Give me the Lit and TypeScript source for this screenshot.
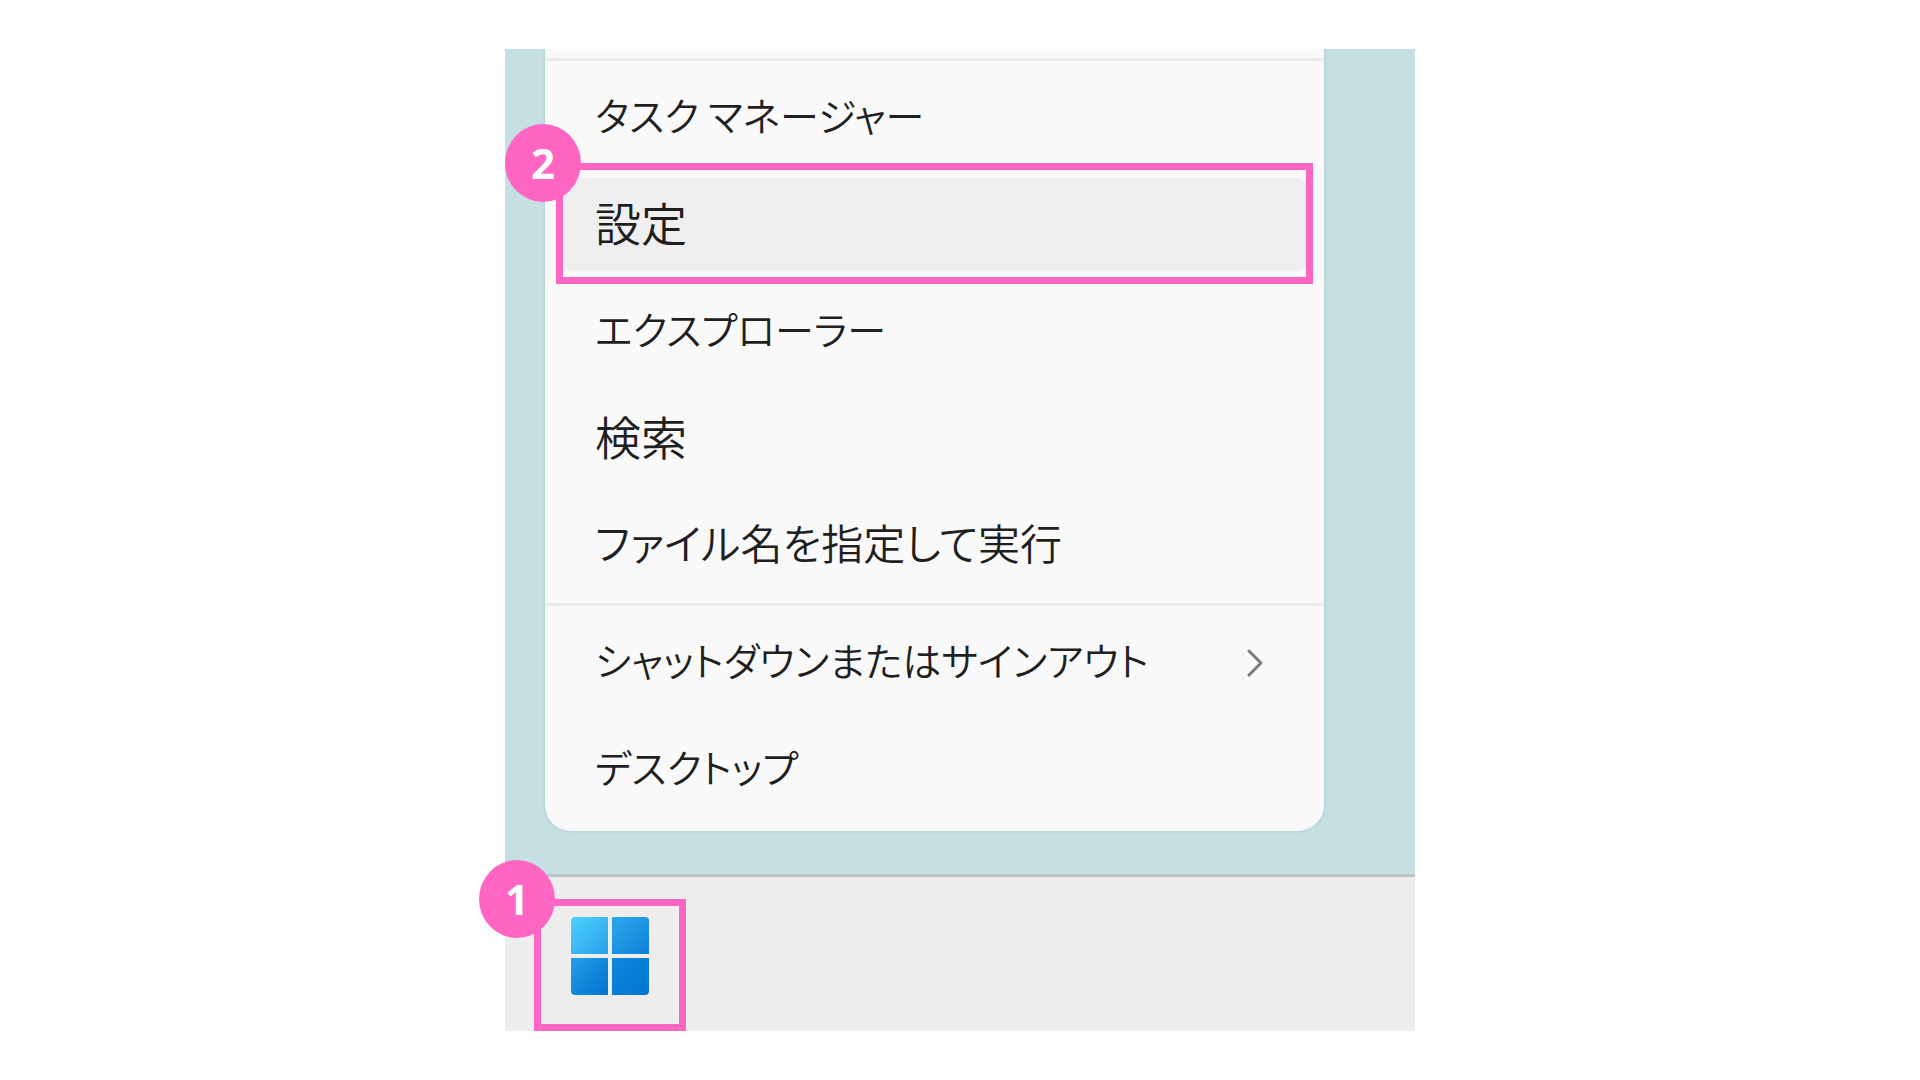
import { LitElement, html, svg, css } from "lit";
import { customElement, property } from "lit/decorators.js";

interface MenuEntry {
  label: string;
  size?: "medium" | "large";
  submenu?: boolean;
  step?: number;
}

const GROUPS: MenuEntry[][] = [
  [
    { label: "タスク マネージャー" },
    { label: "設定", size: "large", step: 2 },
    { label: "エクスプローラー" },
    { label: "検索", size: "large" },
    { label: "ファイル名を指定して実行", size: "medium" },
  ],
  [
    { label: "シャットダウンまたはサインアウト", submenu: true },
    { label: "デスクトップ" },
  ],
];

/* Pink frame with a numbered badge, laid over the control it points at. */
@customElement("step-marker")
export class StepMarker extends LitElement {
  @property({ type: Number }) step = 1;

  static styles = css`
    :host {
      position: absolute;
      box-sizing: border-box;
      border: 7px solid #ff66c4;
      pointer-events: none;
    }
    .badge {
      position: absolute;
      top: var(--badge-top, -46px);
      left: var(--badge-left, -58px);
      display: flex;
      align-items: center;
      justify-content: center;
      width: 76px;
      height: 78px;
      border-radius: 50%;
      background: #ff66c4;
      color: #fff;
      font: 700 42px/48px "Noto Sans", sans-serif;
    }
  `;

  render() {
    return html`<span class="badge">${this.step}</span>`;
  }
}

@customElement("app-root")
export class AppRoot extends LitElement {
  static styles = css`
    :host {
      display: block;
      min-height: 100vh;
      box-sizing: border-box;
      padding: 49px 24px;
      background: #fff;
      font-family: "Noto Sans CJK JP", sans-serif;
      color: #1f1f1f;
    }
    .screen {
      max-width: 910px;
      margin: 0 auto;
    }
    .desktop {
      padding: 0 91px 43px 40px;
      background: #c6dfe2;
    }
    .menu {
      padding: 9px 0 15px;
      border-radius: 0 0 26px 26px;
      background: #f9f9f9;
      box-shadow: 0 0 3px 1px #b4d0d4;
      clip-path: inset(0 -6px -6px -60px);
    }
    .divider {
      height: 3px;
      margin: 0 0 10px;
      border: 0;
      background: #ebebeb;
    }
    .group {
      display: flex;
      flex-direction: column;
      gap: 14px;
      margin: 0;
      padding: 0 16px;
      list-style: none;
    }
    .group + .divider {
      margin-top: 11px;
    }
    .row {
      position: relative;
    }
    .item {
      display: flex;
      align-items: center;
      justify-content: space-between;
      width: 100%;
      min-height: 93px;
      padding: 0 45px 0 34px;
      border: 0;
      border-radius: 12px;
      background: transparent;
      color: inherit;
      font: 350 39px/56px "Noto Sans CJK JP", sans-serif;
      font-feature-settings: "palt";
      text-align: left;
    }
    .item.medium {
      font-size: 42px;
    }
    .item.large {
      font-size: 46px;
    }
    .item.active {
      background: #efefef;
    }
    .label {
      padding-bottom: 8px;
    }
    .chevron {
      display: block;
      width: 16px;
      height: 28px;
    }
    .row step-marker {
      inset: -15px -5px -13px -5px;
    }
    .taskbar {
      display: flex;
      padding: 22px 29px 0;
      border-top: 3px solid #c2c4c4;
      background: #ededed;
    }
    .start {
      position: relative;
      display: flex;
      padding: 18px 37px 36px;
      border: 0;
      background: transparent;
    }
    .start step-marker {
      inset: 0;
      --badge-left: -62px;
    }
    .logo {
      display: block;
      width: 78px;
      height: 78px;
    }
  `;

  private chevron() {
    return html`<svg class="chevron" viewBox="0 0 16 28" aria-hidden="true">
      <path d="M2 2 L14 14 L2 26" fill="none" stroke="#7c7c7c" stroke-width="3" stroke-linecap="round" stroke-linejoin="round" />
    </svg>`;
  }

  private logo() {
    const stop = (id: string, from: string, to: string) => svg`
      <linearGradient id=${id} x1="0" y1="0" x2="1" y2="1">
        <stop offset="0" stop-color=${from} />
        <stop offset="1" stop-color=${to} />
      </linearGradient>`;
    return html`<svg class="logo" viewBox="0 0 78 78" aria-hidden="true">
      <defs>
        ${stop("a", "#4fd2ff", "#24a0e8")}
        ${stop("b", "#2ea9ea", "#0c80da")}
        ${stop("c", "#23a0e6", "#0072d0")}
        ${stop("d", "#0f88de", "#0074d2")}
      </defs>
      <path d="M4 0H37V37H0V4Q0 0 4 0Z" fill="url(#a)" />
      <path d="M41 0H74Q78 0 78 4V37H41Z" fill="url(#b)" />
      <path d="M0 41H37V78H4Q0 78 0 74Z" fill="url(#c)" />
      <path d="M41 41H78V74Q78 78 74 78H41Z" fill="url(#d)" />
    </svg>`;
  }

  private row(entry: MenuEntry) {
    const classes = `item ${entry.size ?? ""} ${entry.step ? "active" : ""}`;
    return html`<li class="row">
      <button class=${classes} type="button">
        <span class="label">${entry.label}</span>
        ${entry.submenu ? this.chevron() : null}
      </button>
      ${entry.step ? html`<step-marker .step=${entry.step}></step-marker>` : null}
    </li>`;
  }

  render() {
    return html`<main class="screen">
      <div class="desktop">
        <nav class="menu">
          ${GROUPS.map(
            (group) => html`<hr class="divider" />
              <ul class="group">${group.map((entry) => this.row(entry))}</ul>`
          )}
        </nav>
      </div>
      <div class="taskbar">
        <button class="start" type="button" aria-label="スタート">
          ${this.logo()}
          <step-marker .step=${1}></step-marker>
        </button>
      </div>
    </main>`;
  }
}
